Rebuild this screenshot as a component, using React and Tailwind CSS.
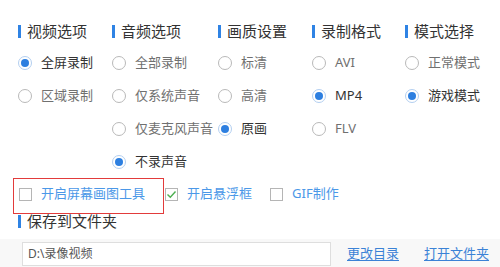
import React from 'react';

const columns = [
  {
    title: '视频选项',
    width: 'w-[94px]',
    items: [
      { label: '全屏录制', checked: true },
      { label: '区域录制' },
    ],
  },
  {
    title: '音频选项',
    width: 'w-[106px]',
    items: [
      { label: '全部录制' },
      { label: '仅系统声音' },
      { label: '仅麦克风声音' },
      { label: '不录声音', checked: true },
    ],
  },
  {
    title: '画质设置',
    width: 'w-[94px]',
    items: [
      { label: '标清' },
      { label: '高清' },
      { label: '原画', checked: true },
    ],
  },
  {
    title: '录制格式',
    width: 'w-[93px]',
    items: [
      { label: 'AVI' },
      { label: 'MP4', checked: true },
      { label: 'FLV' },
    ],
  },
  {
    title: '模式选择',
    width: 'w-[95px]',
    items: [
      { label: '正常模式' },
      { label: '游戏模式', checked: true },
    ],
  },
];

function SectionTitle({ children }) {
  return (
    <div className="flex items-center h-[20px] gap-[6px]">
      <span className="w-[3px] h-[13px] bg-[#2f83e4]" />
      <span className="text-[15px] leading-[20px] text-[#333]">{children}</span>
    </div>
  );
}

function Radio({ label, checked }) {
  return (
    <div className="flex items-center h-[33px] whitespace-nowrap">
      <span
        className={
          'w-[14px] h-[14px] rounded-full border flex items-center justify-center shrink-0 bg-white ' +
          (checked ? 'border-[#b3cff0]' : 'border-[#b9b9b9]')
        }
      >
        {checked && <span className="w-[8px] h-[8px] rounded-full bg-[#2d7fe0]" />}
      </span>
      <span className={'ml-[9px] text-[13px] ' + (checked ? 'text-[#333]' : 'text-[#707070]')}>{label}</span>
    </div>
  );
}

function Checkbox({ label, checked }) {
  return (
    <div className="flex items-center">
      <span className="w-[13px] h-[13px] border border-[#b5b5b5] bg-white flex items-center justify-center shrink-0">
        {checked && (
          <svg width="11" height="11" viewBox="0 0 11 11">
            <path d="M1.5 5.5 L4.3 8.3 L9.5 2.5" fill="none" stroke="#4caf50" strokeWidth="1.4" />
          </svg>
        )}
      </span>
      <span className="ml-[9px] text-[13px] text-[#4b98e8] whitespace-nowrap">{label}</span>
    </div>
  );
}

export default function App() {
  return (
    <div
      className="relative w-[500px] h-[267px] bg-white overflow-hidden"
      style={{ fontFamily: '"Noto Sans", "Noto Sans CJK SC", sans-serif' }}
    >
      <div className="flex pl-[18px] pt-[21px]">
        {columns.map((col) => (
          <div key={col.title} className={col.width + ' shrink-0 flex flex-col'}>
            <SectionTitle>{col.title}</SectionTitle>
            <div className="mt-[5px] flex flex-col">
              {col.items.map((it) => (
                <Radio key={it.label} label={it.label} checked={it.checked} />
              ))}
            </div>
          </div>
        ))}
      </div>

      <div className="flex items-center h-[24px] mt-[4px] pl-[19px]">
        <Checkbox label="开启屏幕画图工具" />
        <div className="ml-[20px]">
          <Checkbox label="开启悬浮框" checked />
        </div>
        <div className="ml-[18px]">
          <Checkbox label="GIF制作" />
        </div>
      </div>

      <div className="pl-[18px] mt-[5px]">
        <SectionTitle>保存到文件夹</SectionTitle>
      </div>

      <div className="flex items-center mt-[8px] pl-[22px] h-[29px] bg-[#f8f8f8]">
        <div className="w-[309px] h-[24px] border border-[#dedede] bg-white flex items-center pl-[5px] text-[12px] text-[#555]">
          D:\录像视频
        </div>
        <a className="ml-[16px] text-[13px] text-[#3b82d6] underline underline-offset-2">更改目录</a>
        <a className="ml-[25px] text-[13px] text-[#3b82d6] underline underline-offset-2">打开文件夹</a>
      </div>

      {/* annotation highlight */}
      <div className="absolute left-[13px] top-[178px] w-[151px] h-[36px] border border-[#e23b3b] pointer-events-none" />
    </div>
  );
}
